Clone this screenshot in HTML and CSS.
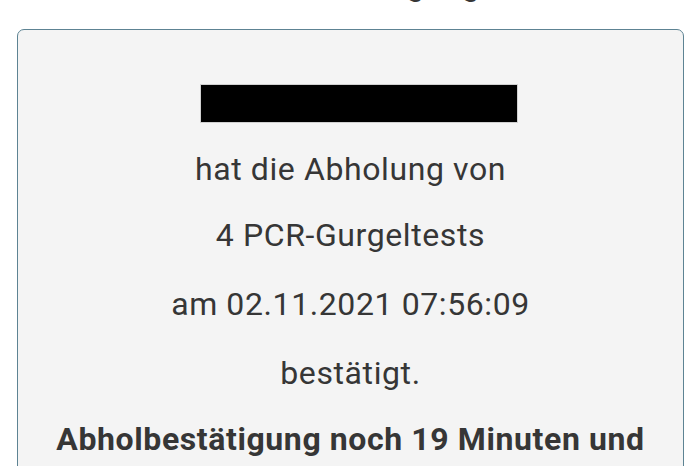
FILE: index.html
```html
<!DOCTYPE html>
<html lang="de">
<head>
<meta charset="utf-8">
<link rel="stylesheet" href="styles.css">
</head>
<body>
<h1 class="title">Abholbestätigung</h1>
<div class="card">
  <div class="redact"></div>
  <p class="line first">hat die Abholung von</p>
  <p class="line">4 PCR-Gurgeltests</p>
  <p class="line">am 02.11.2021 07:56:09</p>
  <p class="line">bestätigt.</p>
  <p class="line strong">Abholbestätigung noch 19 Minuten und</p>
</div>
</body>
</html>
```
FILE: styles.css
```css
html, body {
  margin: 0;
  padding: 0;
  background: #ffffff;
  font-family: Roboto, "Liberation Sans", sans-serif;
  color: #363636;
}
body {
  width: 700px;
  height: 466px;
  overflow: hidden;
}
.title {
  margin: -30px 0 0 0;
  height: 30px;
  line-height: 30px;
  font-size: 32px;
  font-weight: 400;
  letter-spacing: 0.6px;
  text-align: center;
}
.card {
  margin: 29px 16px 0 17px;
  border: 1.5px solid #5d8393;
  border-radius: 7px;
  background: #f4f4f4;
  padding: 54px 0 30px;
  text-align: center;
}
.redact {
  width: 318px;
  height: 39px;
  margin: 0 0 9px 182px;
  background: #000;
  border: 1px solid #d0d0d0;
  box-sizing: border-box;
}
.line {
  margin: 0;
  font-size: 32px;
  letter-spacing: 0.6px;
  line-height: 69px;
}
.first {
  padding-top: 6px;
  line-height: 63px;
}
.strong {
  font-weight: 700;
  line-height: 62px;
}
```
